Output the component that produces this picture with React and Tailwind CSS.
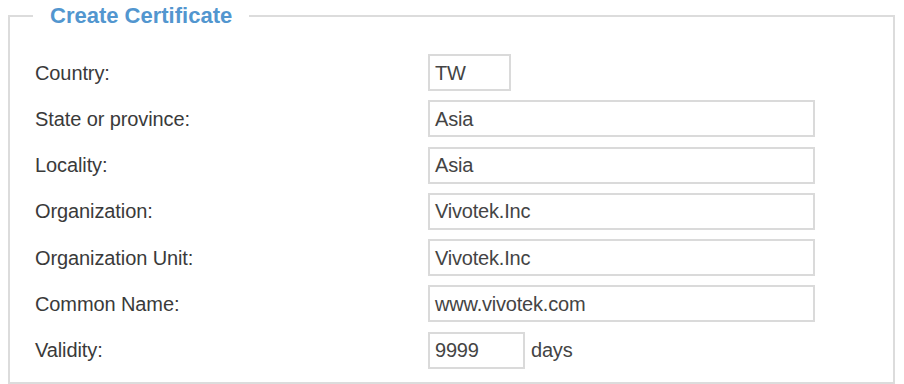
export default function App() {
  const rows = [
    { label: "Country:", value: "TW", w: "w-[83px]" },
    { label: "State or province:", value: "Asia", w: "w-[387px]" },
    { label: "Locality:", value: "Asia", w: "w-[387px]" },
    { label: "Organization:", value: "Vivotek.Inc", w: "w-[387px]" },
    { label: "Organization Unit:", value: "Vivotek.Inc", w: "w-[387px]" },
    { label: "Common Name:", value: "www.vivotek.com", w: "w-[387px]" },
    { label: "Validity:", value: "9999", w: "w-[97px]", suffix: "days" },
  ];
  return (
    <div className="w-[904px] h-[384px] bg-white overflow-hidden font-['Liberation_Sans',Arial,sans-serif]">
      <fieldset className="ml-[8px] w-[887px] border-2 border-[#dcdcdc] pl-[25px] pb-[13px]">
        <legend className="ml-[-2px] px-[17px] leading-[32px] text-[22px] font-bold text-[#5296cf]">
          Create Certificate
        </legend>
        <div className="mt-[22px] flex flex-col gap-[9.3px]">
          {rows.map((r) => (
            <div key={r.label} className="flex items-center h-[37px]">
              <div className="w-[393px] text-[20px] text-[#3a3a3a] tracking-[-0.1px]">{r.label}</div>
              <div className={`${r.w} h-[37px] border-2 border-[#dadada] flex items-center pl-[5px] text-[20px] text-[#444] tracking-[-0.2px]`}>
                {r.value}
              </div>
              {r.suffix && (
                <div className="ml-[6px] text-[20px] text-[#444] tracking-[-0.2px]">{r.suffix}</div>
              )}
            </div>
          ))}
        </div>
      </fieldset>
    </div>
  );
}
